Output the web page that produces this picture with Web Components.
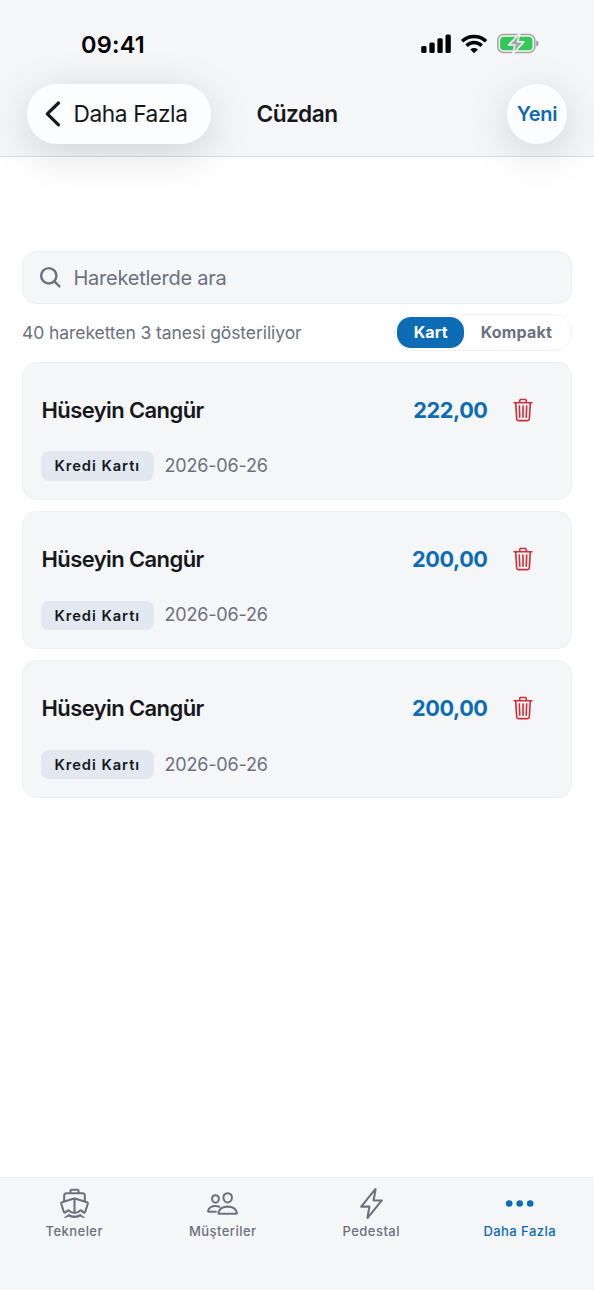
<!DOCTYPE html>
<html lang="tr">
<head>
<meta charset="utf-8">
<title>Cüzdan</title>
<style>
html,body{margin:0;height:100%;background:#fff}
body{font-family:Inter,"Liberation Sans",sans-serif;color:#16181c}
</style>
</head>
<body>
<wallet-app></wallet-app>
<script>
const define=(name,css,html)=>customElements.define(name,class extends HTMLElement{
  connectedCallback(){
    if(this.shadowRoot)return;
    const render=typeof html==='function'?html(this):html;
    this.attachShadow({mode:'open'}).innerHTML=`<style>*{box-sizing:border-box}:host{box-sizing:border-box}${css}</style>${render}`;
  }
});

const icons={
  trash:'<path d="M112 112l20 320c.95 18.49 14.4 32 32 32h184c17.67 0 30.87-13.51 32-32l20-320M80 112h352M192 112V72a23.93 23.93 0 0124-24h80a23.93 23.93 0 0124 24v40M256 176v224M184 176l8 224M328 176l-8 224"/>',
  people:'<path d="M402 168c-2.93 40.67-33.1 72-66 72s-63.12-31.32-66-72c-3-42.31 26.37-72 66-72s69 30.46 66 72zM336 304c-65.17 0-127.84 32.37-143.54 95.41-2.08 8.34 3.15 16.59 11.72 16.59h263.65c8.57 0 13.77-8.25 11.72-16.59C463.85 335.36 401.18 304 336 304zM200 185.94c-2.34 32.48-26.72 58.06-53 58.06s-50.7-25.57-53-58.06C91.61 152.15 115.34 128 147 128s55.39 24.77 53 57.94zM206 306c-18.05-8.27-37.93-11.45-59-11.45-52 0-102.1 25.85-114.65 76.2-1.65 6.66 2.53 13.25 9.37 13.25H154"/>',
  flash:'<path d="M315.27 33L96 304h128l-31.51 173.23a2.36 2.36 0 004.22 1.82L416 208H288l31.66-173.25a2.45 2.45 0 00-4.39-1.75z"/>',
  boat:'<path fill="currentColor" stroke="none" d="M416 473.14a6.84 6.84 0 00-3.56-6c-27.08-14.55-51.77-36.82-62.63-48a10.05 10.05 0 00-12.72-1.51c-50.33 32.42-111.61 32.44-161.95.05a10.09 10.09 0 00-12.82 1.56c-10.77 11.28-35.19 33.3-62.43 47.75A7.15 7.15 0 0096 472.72a6.73 6.73 0 007.86 7.15c20.96-4.18 41.18-10.9 60-19.79a8.03 8.03 0 016.75 0 203.96 203.96 0 00170.74 0 8.03 8.03 0 016.75 0c18.85 8.93 39.13 15.65 60.09 19.86a6.72 6.72 0 007.81-6.8z"/><path d="M264 178L448 236c11 4 17 13 14 25l-41 127c-3 9-10 11-18 8-16-6-31-18-43-31-5-5-11-5-16 0-25 28-55 39-88 39s-63-11-88-39c-5-5-11-5-16 0-12 13-27 25-43 31-8 3-15 1-18-8L50 261c-3-12 3-21 14-25l184-58q8-2 16 0zM256 178v226M96 222V132c0-24 16-36 38-36h244c22 0 38 12 38 36v90M192 96V64c0-12 8-20 20-20h88c12 0 20 8 20 20v32"/>',
  more:'<g fill="currentColor" stroke="none"><circle cx="96" cy="256" r="51"/><circle cx="259" cy="256" r="51"/><circle cx="422" cy="256" r="51"/></g>',
  search:'<path stroke-width="50" d="M221 64a157 157 0 10157 157A157 157 0 00221 64zM336 336l102 102"/>'
};
const icon=(n,s)=>`<svg width="${s}" height="${s}" viewBox="0 0 512 512" fill="none" stroke="currentColor" stroke-width="32" stroke-linecap="round" stroke-linejoin="round">${icons[n]}</svg>`;

define('status-bar',`
:host{display:flex;justify-content:space-between;align-items:center;height:84px;padding:5px 55px 0 81px;color:#000}
time{font-size:23.5px;font-weight:590;line-height:30px;letter-spacing:.2px}
svg{display:block;margin-top:-1px}`,
`<time>09:41</time>
<svg width="118" height="22" viewBox="0 0 118 22">
 <g><rect x="0.2" y="13" width="5.3" height="7" rx="1.5"/><rect x="8.4" y="9.5" width="5.3" height="10.5" rx="1.5"/><rect x="16.4" y="5.2" width="5.3" height="14.8" rx="1.5"/><rect x="24.5" y="1.4" width="5.3" height="18.6" rx="1.5"/></g>
 <g fill="none" stroke="#000" stroke-width="3.5"><path d="M41.1 8.3a17.1 17.1 0 0 1 24 0"/><path d="M45.5 12.7a10.9 10.9 0 0 1 15.2 0"/></g>
 <path d="M49.3 16.4a5.6 5.6 0 0 1 7.6 0L53.1 20.2z"/>
 <rect x="76.8" y="1.6" width="37" height="17.8" rx="5.7" fill="none" stroke="#a0a2a4" stroke-width="1.5"/>
 <path d="M115.3 7.6v5.8c2.9-.8 2.9-5 0-5.8z" fill="#939598"/>
 <rect x="79.1" y="3.8" width="32.4" height="13.4" rx="3.8" fill="#34c759"/>
 <path d="M99 0L87.6 12h6.3L91.5 21.2 103 8.8h-6.3z" fill="#a5a8aa" stroke="#f4f6f8" stroke-width="1.5" stroke-linejoin="round"/>
</svg>`);

define('glass-button',`
:host{display:flex;align-items:center;justify-content:center;height:59.5px;border-radius:30px;background:#fcfdfe;box-shadow:0 9px 44px rgba(0,0,0,.15)}`,
`<slot></slot>`);

define('nav-header',`
:host{display:block;position:relative;z-index:1;height:157px;background:#f4f6f8;border-bottom:1px solid #d9dbdf}
.row{display:grid;grid-template-columns:184px 1fr 60px;align-items:center;padding:0 27px}
.back{justify-content:flex-start;padding-left:18px;gap:12.5px;font-size:22.7px;font-weight:420;letter-spacing:-.4px}
.back svg{display:block}
h1{margin:0 0 0 45.5px;font-size:22.7px;font-weight:580;line-height:30px;letter-spacing:-.5px}
.new{color:#0f6ab0;font-size:20px;font-weight:590;letter-spacing:-.3px}`,
`<status-bar></status-bar>
<div class="row"><glass-button class="back"><svg width="16" height="28" viewBox="0 0 16 28" fill="none" stroke="#16181c" stroke-width="3.2" stroke-linecap="round" stroke-linejoin="round"><path d="M13.5 3L2.3 13.9 13.5 24.8"/></svg><span>Daha Fazla</span></glass-button><h1>Cüzdan</h1><glass-button class="new">Yeni</glass-button></div>`);

define('search-field',`
:host{display:flex;align-items:center;gap:10.5px;height:52.5px;padding:1px 0 0 15px;border:1px solid #ebeef2;border-radius:14px;background:#f4f6f8;color:#6b7180;font-size:20px;line-height:26px;letter-spacing:-.25px}
svg{display:block;margin-top:-1px}`,
`${icon('search',25)}<span><slot></slot></span>`);

define('view-toggle',`
:host{display:flex;height:37px;padding:2px;border:1px solid #f0f2f6;border-radius:18px;background:#fff;font-size:16px;font-weight:700;line-height:31px;color:#6b7180;letter-spacing:.2px}
span{padding:0 16.5px}
.on{border-radius:14px;background:#0d6cb6;color:#fff;width:67px;height:31px}
.off{padding-right:17px}`,
`<span class="on">Kart</span><span class="off">Kompakt</span>`);

define('movement-card',`
:host{display:flex;flex-direction:column;height:138.5px;padding:30.4px 35.5px 0 18.5px;border:1px solid #edf0f3;border-radius:14px;background:#f4f6f8}
.top{display:flex;align-items:center;height:34px;font-size:22px;line-height:34px}
.name{font-weight:580;letter-spacing:-.6px;flex:1}
.amount{color:#0d6cb6;font-weight:680;font-size:21.7px;letter-spacing:-.45px;margin-right:22px}
.top svg{color:#cf2f36;display:block}
.bottom{display:flex;align-items:center;margin:24.3px 0 0 -.5px;gap:11px}
.tag{height:29.5px;padding:0 13.5px;border-radius:8px;background:#e1e8f0;font-size:14.7px;font-weight:600;line-height:31px;letter-spacing:.95px}
.date{font-size:18px;line-height:30px;letter-spacing:-.2px;color:#6b7180}`,
el=>`<div class="top"><span class="name">${el.getAttribute('name')}</span><span class="amount">${el.getAttribute('amount')}</span>${icon('trash',26)}</div>
<div class="bottom"><span class="tag">${el.getAttribute('method')}</span><span class="date">${el.getAttribute('date')}</span></div>`);

define('tab-item',`
:host{display:flex;flex-direction:column;align-items:center;flex:1;padding-top:9px;color:#6b7180;font-size:13px;font-weight:500;line-height:18px;letter-spacing:.45px}
:host([active]){color:#0d6cb6}
svg{display:block;margin-bottom:2px}`,
el=>`${icon(el.getAttribute('icon'),33)}<span><slot></slot></span>`);

define('tab-bar',`
:host{display:flex;height:113px;background:#f4f6f8;border-top:1px solid #eeeff1}`,`<slot></slot>`);

define('wallet-app',`
:host{display:flex;flex-direction:column;height:1290px;width:594px;overflow:hidden}
main{flex:1;padding:94px 22px 0}
.summary{display:flex;justify-content:space-between;align-items:center;margin:10.5px 0}
.count{font-size:17.5px;line-height:24px;letter-spacing:-.08px;color:#6b7180}
.list{display:flex;flex-direction:column;gap:10.7px}`,
`<nav-header></nav-header>
<main><search-field>Hareketlerde ara</search-field>
<div class="summary"><span class="count">40 hareketten 3 tanesi gösteriliyor</span><view-toggle></view-toggle></div>
<div class="list">
<movement-card name="Hüseyin Cangür" amount="222,00" method="Kredi Kartı" date="2026-06-26"></movement-card>
<movement-card name="Hüseyin Cangür" amount="200,00" method="Kredi Kartı" date="2026-06-26"></movement-card>
<movement-card name="Hüseyin Cangür" amount="200,00" method="Kredi Kartı" date="2026-06-26"></movement-card>
</div></main>
<tab-bar><tab-item icon="boat">Tekneler</tab-item><tab-item icon="people">Müşteriler</tab-item><tab-item icon="flash">Pedestal</tab-item><tab-item icon="more" active>Daha Fazla</tab-item></tab-bar>`);
</script>
</body>
</html>
